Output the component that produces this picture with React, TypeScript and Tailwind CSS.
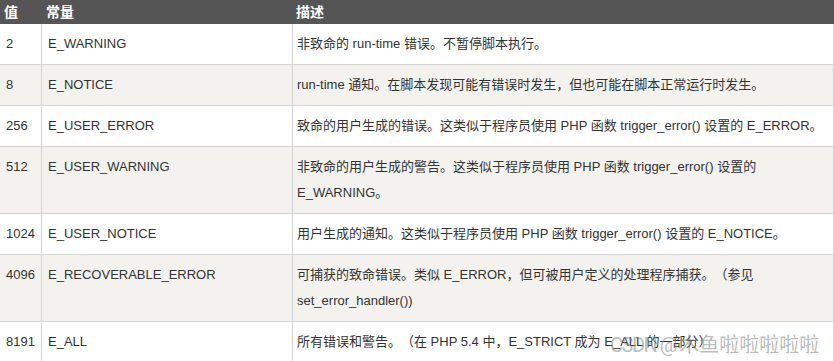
const rows = [
  { value: '2', name: 'E_WARNING', desc: '非致命的 run-time 错误。不暂停脚本执行。' },
  { value: '8', name: 'E_NOTICE', desc: 'run-time 通知。在脚本发现可能有错误时发生，但也可能在脚本正常运行时发生。' },
  { value: '256', name: 'E_USER_ERROR', desc: '致命的用户生成的错误。这类似于程序员使用 PHP 函数 trigger_error() 设置的 E_ERROR。' },
  { value: '512', name: 'E_USER_WARNING', desc: '非致命的用户生成的警告。这类似于程序员使用 PHP 函数 trigger_error() 设置的 E_WARNING。' },
  { value: '1024', name: 'E_USER_NOTICE', desc: '用户生成的通知。这类似于程序员使用 PHP 函数 trigger_error() 设置的 E_NOTICE。' },
  { value: '4096', name: 'E_RECOVERABLE_ERROR', desc: '可捕获的致命错误。类似 E_ERROR，但可被用户定义的处理程序捕获。（参见 set_error_handler())' },
  { value: '8191', name: 'E_ALL', desc: '所有错误和警告。（在 PHP 5.4 中，E_STRICT 成为 E_ALL 的一部分）' },
];

export default function App() {
  return (
    <div className="w-[834px] h-[361px] overflow-hidden bg-white font-['Liberation_Sans','Noto_Sans_CJK_SC',sans-serif] text-[#333333] [text-spacing-trim:space-all]">
      {/* Header */}
      <div className="flex h-[24px] bg-[#555555] text-white font-bold text-[14px] leading-[24px]">
        <div className="w-[41px] pl-[4px]">值</div>
        <div className="w-[251px] pl-[5px]">常量</div>
        <div className="flex-1 pl-[4px]">描述</div>
      </div>

      {rows.map((row, index) => (
        <div
          key={row.value}
          className={`relative flex border-b border-[#d4d4d4] text-[13px] leading-[26px] ${index % 2 === 1 ? 'bg-[#f3f2ef]' : 'bg-white'}`}
        >
          <div className="w-[41px] shrink-0 pl-[6px] py-[7px]">{row.value}</div>
          <div className="w-[251px] shrink-0 border-l border-[#d4d4d4] pl-[6px] py-[7px]">{row.name}</div>
          <div className="w-[542px] shrink-0 border-l border-r border-[#d4d4d4] pl-[4px] pr-[6px] py-[7px]">
            {row.desc}
          </div>
          {/* CSDN watermark sitting over the last row */}
          {row.value === '8191' && (
            <div className="absolute left-[610px] top-[9px] text-[20px] leading-[28px] text-[rgba(130,130,130,0.55)] whitespace-nowrap">
              <span className="font-['Roboto',sans-serif] tracking-[-1.5px]">CSDN @</span>
              <span className="ml-[3px]">木鱼啦啦啦啦啦</span>
            </div>
          )}
        </div>
      ))}
    </div>
  );
}
